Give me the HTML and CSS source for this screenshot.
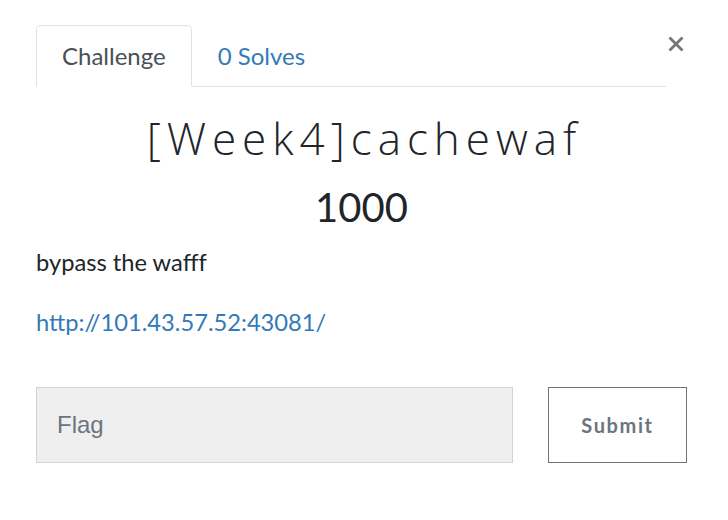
FILE: index.html
```html
<!DOCTYPE html>
<html lang="en">
<head>
<meta charset="utf-8">
<title>Challenge</title>
<link rel="stylesheet" href="styles.css">
</head>
<body>
<div class="dialog">
  <div class="head">
    <ul class="tabs">
      <li class="tab active">Challenge</li>
      <li class="tab">0 Solves</li>
    </ul>
    <button class="close" type="button" aria-label="Close">
      <svg width="16" height="16" viewBox="0 0 16 16"><path d="M1.5 1.5 L14.5 14.5 M14.5 1.5 L1.5 14.5" stroke="#767676" stroke-width="2.8" stroke-linecap="butt"/></svg>
    </button>
  </div>
  <h2 class="title">[Week4]cachewaf</h2>
  <h3 class="value">1000</h3>
  <p class="desc">bypass the wafff</p>
  <p class="desc link-line"><a href="#">http://101.43.57.52:43081/</a></p>
  <form class="flag-row">
    <input class="flag-input" type="text" placeholder="Flag">
    <button class="submit" type="button">Submit</button>
  </form>
</div>
</body>
</html>
```
FILE: styles.css
```css
html, body {
  margin: 0;
  padding: 0;
  background: #ffffff;
}
body {
  font-family: "Lato", "Liberation Sans", sans-serif;
  color: #212529;
}
.dialog {
  padding: 25px 41px 0 36px;
}
.head {
  display: flex;
  align-items: flex-start;
}
.tabs {
  list-style: none;
  margin: 0;
  padding: 0;
  display: flex;
  flex: 0 0 630px;
  border-bottom: 1px solid #dee2e6;
}
.tab {
  font-size: 24px;
  line-height: 36px;
  padding: 12px 25px 12px;
  border: 1px solid transparent;
  border-radius: 5px 5px 0 0;
  margin-bottom: -1px;
  color: #337ab7;
}
.tab.active {
  color: #495057;
  background: #fff;
  border-color: #dee2e6 #dee2e6 #fff;
}
.close {
  margin: 11px 0 0 2px;
  padding: 0;
  border: 0;
  background: none;
  width: 16px;
  height: 16px;
  display: flex;
}
.title {
  margin: 25px 0 0;
  padding-left: 6px;
  text-align: center;
  font-family: "Open Sans", "Lato", sans-serif;
  font-weight: 300;
  font-size: 44px;
  line-height: 1.2;
  letter-spacing: 6px;
  color: #212529;
}
.value {
  margin: 18px 0 0;
  text-align: center;
  font-weight: 400;
  font-size: 40px;
  line-height: 1.2;
  color: #212529;
}
.desc {
  margin: 13px 0 0;
  font-size: 23.7px;
  line-height: 36px;
}
.link-line {
  margin-top: 24px;
}
.desc a {
  color: #337ab7;
  text-decoration: none;
}
.flag-row {
  display: flex;
  gap: 35px;
  margin-top: 47px;
}
.flag-input {
  flex: 0 0 477px;
  box-sizing: border-box;
  height: 76px;
  margin: 0;
  padding: 0 20px;
  background: #efefef;
  border: 1px solid #ced4da;
  border-radius: 0;
  font-family: "Liberation Sans", Arial, sans-serif;
  font-size: 24px;
  color: #495057;
  outline: none;
}
.flag-input::placeholder {
  color: #6c757d;
  opacity: 1;
}
.submit {
  flex: 1 1 auto;
  box-sizing: border-box;
  height: 76px;
  margin: 0;
  background: #fff;
  border: 1px solid #6c757d;
  border-radius: 0;
  font-family: "Lato", sans-serif;
  font-weight: 700;
  font-size: 20px;
  letter-spacing: 1.6px;
  color: #6c757d;
}
```
